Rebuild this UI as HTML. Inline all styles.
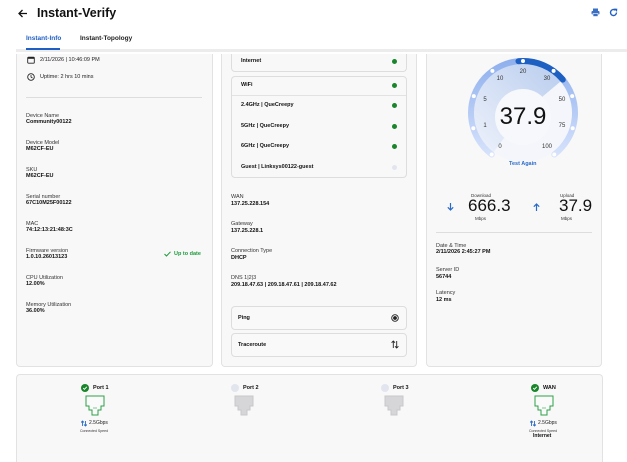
<!DOCTYPE html>
<html><head><meta charset="utf-8"><style>
*{margin:0;padding:0;box-sizing:border-box}
html,body{width:627px;height:462px;overflow:hidden}
body{background:#fff;font-family:"Liberation Sans",sans-serif;color:#111;position:relative}
.a{position:absolute;white-space:nowrap}
.l{font-size:5.5px;color:#333}
.v{font-size:5.5px;font-weight:bold;color:#111}
.card{position:absolute;background:#f8f8f8;border:1px solid #e2e2e2;border-radius:0 0 4px 4px;border-top:none}
.box{position:absolute;background:#f8f8f8;border:1px solid #ddd;border-radius:4px}
.dot{position:absolute;width:5px;height:5px;border-radius:50%;background:#19862b}
.b{font-size:5.5px;font-weight:bold}
</style></head><body>
<!-- header -->
<svg class="a" style="left:17px;top:8px" width="11" height="11" viewBox="0 0 11 11"><path d="M10 5.5H2M5.5 2L2 5.5 5.5 9" stroke="#111" stroke-width="1.3" fill="none"/></svg>
<div class="a" style="left:37px;top:6px;font-size:12.5px;font-weight:bold">Instant-Verify</div>
<svg class="a" style="left:591px;top:8px" width="9" height="9" viewBox="0 0 9 9"><rect x="2" y="0.5" width="5" height="2.5" fill="#3a6fc4"/><rect x="0.5" y="3" width="8" height="3.5" rx="1" fill="#3a6fc4"/><rect x="2" y="5.5" width="5" height="3" fill="#3a6fc4" stroke="#fff" stroke-width=".6"/></svg>
<svg class="a" style="left:609px;top:8px" width="9" height="9" viewBox="0 0 9 9"><path d="M7.5 4.5A3 3 0 1 1 6.4 2.2" stroke="#1f5fc4" stroke-width="1.4" fill="none"/><path d="M5 0.5L8.3 0.8 8 4z" fill="#1f5fc4"/></svg>
<div class="a" style="left:26px;top:35px;font-size:6.5px;font-weight:bold;color:#1f5fc4">Instant-Info</div>
<div class="a" style="left:80px;top:35px;font-size:6.5px;font-weight:bold;color:#222">Instant-Topology</div>
<div class="a" style="left:16px;top:49px;width:611px;height:3px;background:#ececec"></div>
<div class="a" style="left:26px;top:48px;width:34px;height:2px;background:#1f5fc4"></div>

<!-- left card -->
<div class="card" style="left:16px;top:54px;width:197px;height:313px"></div>
<svg class="a" style="left:27px;top:56px" width="8" height="8" viewBox="0 0 8 8"><rect x=".7" y="1.2" width="6.6" height="6" rx=".8" fill="none" stroke="#222" stroke-width=".9"/><rect x=".7" y="1.2" width="6.6" height="1.6" fill="#222"/></svg>
<div class="a l" style="left:40px;top:57px;color:#222">2/11/2026 | 10:46:09 PM</div>
<svg class="a" style="left:27px;top:73px" width="8" height="8" viewBox="0 0 8 8"><circle cx="4" cy="4" r="3.3" fill="none" stroke="#222" stroke-width=".9"/><path d="M4 2v2l1.5 1" stroke="#222" stroke-width=".8" fill="none"/></svg>
<div class="a l" style="left:40px;top:74px;color:#222">Uptime: 2 hrs 10 mins</div>
<div class="a" style="left:26px;top:97px;width:176px;height:1px;background:#ddd"></div>
<div class="a l" style="left:26px;top:113px">Device Name</div><div class="a v" style="left:26px;top:119px">Community00122</div>
<div class="a l" style="left:26px;top:140px">Device Model</div><div class="a v" style="left:26px;top:146px">M62CF-EU</div>
<div class="a l" style="left:26px;top:167px">SKU</div><div class="a v" style="left:26px;top:173px">M62CF-EU</div>
<div class="a l" style="left:26px;top:194px">Serial number</div><div class="a v" style="left:26px;top:200px">67C10M25F00122</div>
<div class="a l" style="left:26px;top:221px">MAC</div><div class="a v" style="left:26px;top:227px">74:12:13:21:48:3C</div>
<div class="a l" style="left:26px;top:248px">Firmware version</div><div class="a v" style="left:26px;top:254px">1.0.10.26013123</div>
<svg class="a" style="left:164px;top:251px" width="7" height="6" viewBox="0 0 7 6"><path d="M.5 3l2 2L6.5.8" stroke="#1d9a3a" stroke-width="1" fill="none"/></svg>
<div class="a b" style="left:174px;top:251px;color:#1d9a3a">Up to date</div>
<div class="a l" style="left:26px;top:275px">CPU Utilization</div><div class="a v" style="left:26px;top:281px">12.00%</div>
<div class="a l" style="left:26px;top:302px">Memory Utilization</div><div class="a v" style="left:26px;top:308px">36.00%</div>

<!-- middle card -->
<div class="card" style="left:221px;top:54px;width:196px;height:313px"></div>
<div class="box" style="left:231px;top:54px;width:176px;height:18px;border-top:none;border-radius:0 0 4px 4px"></div>
<div class="a b" style="left:241px;top:58px">Internet</div><div class="dot" style="left:392px;top:59px"></div>
<div class="box" style="left:231px;top:76px;width:176px;height:102px"></div>
<div class="a" style="left:232px;top:95px;width:174px;height:1px;background:#e2e2e2"></div>
<div class="a b" style="left:241px;top:82px">WiFi</div><div class="dot" style="left:392px;top:83px"></div>
<div class="a b" style="left:241px;top:102px">2.4GHz | QueCreepy</div><div class="dot" style="left:392px;top:103px"></div>
<div class="a b" style="left:241px;top:123px">5GHz | QueCreepy</div><div class="dot" style="left:392px;top:124px"></div>
<div class="a b" style="left:241px;top:143px">6GHz | QueCreepy</div><div class="dot" style="left:392px;top:144px"></div>
<div class="a b" style="left:241px;top:164px">Guest | Linksys00122-guest</div><div class="dot" style="left:392px;top:165px;background:#e2e5ee"></div>
<div class="a l" style="left:231px;top:194px">WAN</div><div class="a v" style="left:231px;top:201px">137.25.228.154</div>
<div class="a l" style="left:231px;top:221px">Gateway</div><div class="a v" style="left:231px;top:228px">137.25.228.1</div>
<div class="a l" style="left:231px;top:248px">Connection Type</div><div class="a v" style="left:231px;top:255px">DHCP</div>
<div class="a l" style="left:231px;top:275px">DNS 1|2|3</div><div class="a v" style="left:231px;top:282px">209.18.47.63 | 209.18.47.61 | 209.18.47.62</div>
<div class="box" style="left:231px;top:306px;width:176px;height:24px;background:#f9f9f9"></div>
<div class="a b" style="left:238px;top:315px">Ping</div>
<svg class="a" style="left:391px;top:314px" width="8" height="8" viewBox="0 0 8 8"><circle cx="4" cy="4" r="3.3" fill="none" stroke="#222" stroke-width=".9"/><circle cx="4" cy="4" r="1.9" fill="#222"/></svg>
<div class="box" style="left:231px;top:333px;width:176px;height:24px;background:#f9f9f9"></div>
<div class="a b" style="left:238px;top:342px">Traceroute</div>
<svg class="a" style="left:391px;top:340px" width="8" height="9" viewBox="0 0 8 9"><path d="M2.3 8V1M.6 2.7L2.3 1 4 2.7M5.7 1v7M4 6.3L5.7 8 7.4 6.3" stroke="#222" stroke-width=".9" fill="none"/></svg>

<!-- right card -->
<div class="card" style="left:426px;top:54px;width:176px;height:313px"></div>
<svg class="a" style="left:463px;top:53px" width="120" height="120" viewBox="0 0 120 120">
<defs>
<linearGradient id="rg" x1="0" y1="0" x2="0" y2="1"><stop offset="0" stop-color="#8fb0ee"/><stop offset="1" stop-color="#d6e2fb"/></linearGradient>
<linearGradient id="sg" x1="0" y1="1" x2="1" y2="0"><stop offset="0" stop-color="#eef2fb"/><stop offset="1" stop-color="#b9cdee"/></linearGradient>
</defs>
<circle cx="60" cy="60" r="49" fill="#f4f6fb"/>
<path d="M60 60L30.5 99.1A49 49 0 1 1 97.5 28.5Z" fill="url(#sg)"/>
<circle cx="60" cy="64" r="28" fill="#f6f8fc"/>
<path d="M28.7 101.5A52 52 0 1 1 91.3 101.5" fill="none" stroke="url(#rg)" stroke-width="6" stroke-linecap="round"/>
<path d="M55.5 8.2A52 52 0 0 1 99.8 26.6" fill="none" stroke="#1e5fc2" stroke-width="6" stroke-linecap="round"/>
<g fill="#fff"><circle cx="28.7" cy="101.5" r="2"/><circle cx="10.3" cy="75.2" r="2"/><circle cx="10.8" cy="43.1" r="2"/><circle cx="29.4" cy="17.9" r="2"/><circle cx="60" cy="8" r="2"/><circle cx="90.6" cy="17.9" r="2"/><circle cx="109.2" cy="43.1" r="2"/><circle cx="109.7" cy="75.2" r="2"/><circle cx="91.3" cy="101.5" r="2"/></g>
<g font-family="Liberation Sans" font-size="6" fill="#333" text-anchor="middle">
<text x="37" y="95">0</text><text x="22" y="74">1</text><text x="22" y="48">5</text><text x="37" y="27">10</text><text x="60" y="20">20</text><text x="84" y="27">30</text><text x="99" y="48">50</text><text x="99" y="74">75</text><text x="84" y="95">100</text>
</g>
<text x="60" y="71" text-anchor="middle" font-family="Liberation Sans" font-size="24" fill="#111">37.9</text>
</svg>
<div class="a b" style="left:509px;top:161px;color:#2a6bc9">Test Again</div>
<div class="a" style="left:471px;top:193px;font-size:4.5px;color:#333">Download</div>
<div class="a" style="left:468px;top:196px;font-size:17px;color:#111">666.3</div>
<div class="a" style="left:475px;top:216px;font-size:4.5px;color:#333">Mbps</div>
<svg class="a" style="left:447px;top:203px" width="7" height="8" viewBox="0 0 7 8"><path d="M3.5 0v7M.8 4.3l2.7 2.7 2.7-2.7" stroke="#2a6bc9" stroke-width="1.2" fill="none"/></svg>
<div class="a" style="left:560px;top:193px;font-size:4.5px;color:#333">Upload</div>
<div class="a" style="left:559px;top:196px;font-size:17px;color:#111">37.9</div>
<div class="a" style="left:561px;top:216px;font-size:4.5px;color:#333">Mbps</div>
<svg class="a" style="left:533px;top:203px" width="7" height="8" viewBox="0 0 7 8"><path d="M3.5 8V1M.8 3.7l2.7-2.7 2.7 2.7" stroke="#2a6bc9" stroke-width="1.2" fill="none"/></svg>
<div class="a" style="left:436px;top:232px;width:156px;height:1px;background:#ddd"></div>
<div class="a l" style="left:436px;top:243px">Date &amp; Time</div><div class="a v" style="left:436px;top:249px">2/11/2026 2:45:27 PM</div>
<div class="a l" style="left:436px;top:267px">Server ID</div><div class="a v" style="left:436px;top:274px">56744</div>
<div class="a l" style="left:436px;top:290px">Latency</div><div class="a v" style="left:436px;top:297px">12 ms</div>

<!-- bottom card -->
<div class="a" style="left:16px;top:374px;width:587px;height:88px;background:#f8f8f8;border:1px solid #e2e2e2;border-bottom:none;border-radius:4px 4px 0 0"></div>

<svg class="a" style="left:81px;top:384px" width="8" height="8" viewBox="0 0 8 8"><circle cx="4" cy="4" r="4" fill="#19862b"/><path d="M2.2 4.1l1.2 1.2 2.4-2.5" stroke="#fff" stroke-width=".9" fill="none"/></svg>
<div class="a b" style="left:93px;top:385px">Port 1</div>
<svg class="a" style="left:85px;top:395px" width="20" height="21" viewBox="0 0 20 21"><path d="M1 1h18v10h-3v4h-3v5H7v-5H4v-4H1z" fill="#fafafa" stroke="#2fa04a" stroke-width="1"/><path d="M8 13h4" stroke="#2fa04a" stroke-width=".6"/></svg>
<svg class="a" style="left:81px;top:420px" width="6" height="7" viewBox="0 0 6 7"><path d="M1.5 6V1M0 2.5L1.5 1 3 2.5M4.5 1v5M3 4.5L4.5 6 6 4.5" stroke="#2a6bc9" stroke-width=".9" fill="none"/></svg>
<div class="a" style="left:89px;top:420px;font-size:5px;color:#222">2.5Gbps</div>
<div class="a" style="left:80px;top:429px;font-size:3.5px;color:#333">Connected Speed</div>

<div class="a" style="left:231px;top:384px;width:8px;height:8px;border-radius:50%;background:#e2e5ee"></div>
<div class="a b" style="left:243px;top:385px">Port 2</div>
<svg class="a" style="left:234px;top:395px" width="20" height="21" viewBox="0 0 20 21"><path d="M1 1h18v10h-3v4h-3v5H7v-5H4v-4H1z" fill="#d6d6d8" stroke="#c8c8cb" stroke-width="1"/></svg>
<div class="a" style="left:381px;top:384px;width:8px;height:8px;border-radius:50%;background:#e2e5ee"></div>
<div class="a b" style="left:393px;top:385px">Port 3</div>
<svg class="a" style="left:384px;top:395px" width="20" height="21" viewBox="0 0 20 21"><path d="M1 1h18v10h-3v4h-3v5H7v-5H4v-4H1z" fill="#d6d6d8" stroke="#c8c8cb" stroke-width="1"/></svg>

<svg class="a" style="left:531px;top:384px" width="8" height="8" viewBox="0 0 8 8"><circle cx="4" cy="4" r="4" fill="#19862b"/><path d="M2.2 4.1l1.2 1.2 2.4-2.5" stroke="#fff" stroke-width=".9" fill="none"/></svg>
<div class="a b" style="left:543px;top:385px">WAN</div>
<svg class="a" style="left:534px;top:395px" width="20" height="21" viewBox="0 0 20 21"><path d="M1 1h18v10h-3v4h-3v5H7v-5H4v-4H1z" fill="#fafafa" stroke="#2fa04a" stroke-width="1"/><path d="M8 13h4" stroke="#2fa04a" stroke-width=".6"/></svg>
<svg class="a" style="left:530px;top:420px" width="6" height="7" viewBox="0 0 6 7"><path d="M1.5 6V1M0 2.5L1.5 1 3 2.5M4.5 1v5M3 4.5L4.5 6 6 4.5" stroke="#2a6bc9" stroke-width=".9" fill="none"/></svg>
<div class="a" style="left:538px;top:420px;font-size:5px;color:#222">2.5Gbps</div>
<div class="a" style="left:529px;top:429px;font-size:3.5px;color:#333">Connected Speed</div>
<div class="a b" style="left:533px;top:433px;font-size:5px">Internet</div>
</body></html>
